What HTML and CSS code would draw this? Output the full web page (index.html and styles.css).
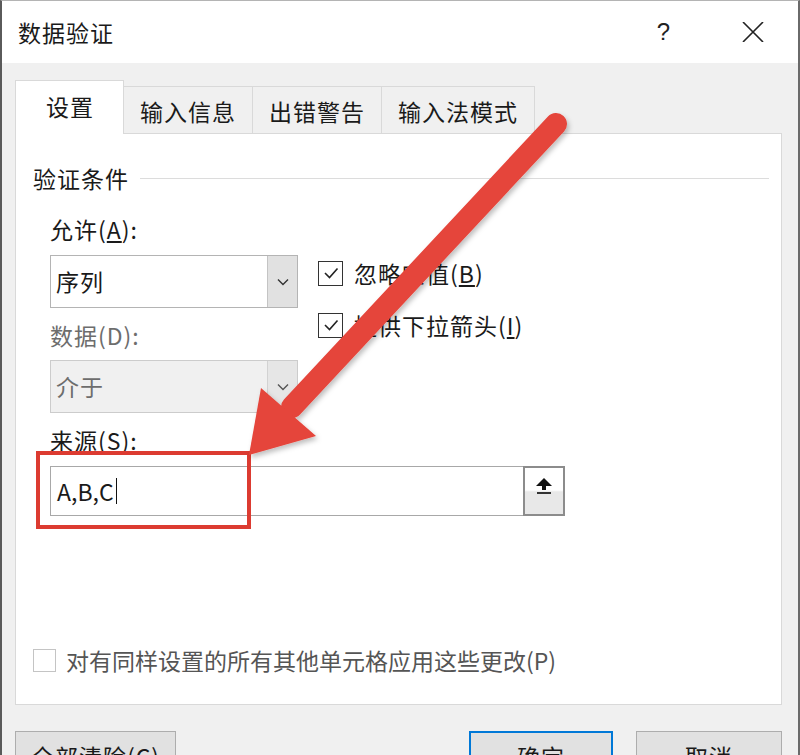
FILE: index.html
```html
<!DOCTYPE html>
<html lang="zh-CN">
<head>
    <meta charset="UTF-8">
    <meta name="viewport" content="width=device-width, initial-scale=1.0">
    <title>数据验证</title>
    <link rel="stylesheet" href="styles.css">
</head>
<body>

    <div class="dialog">

        <!-- Title bar -->
        <header class="titlebar">
            <span class="title">数据验证</span>
            <div class="title-actions">
                <span class="help">?</span>
                <svg class="close" width="22" height="20" viewBox="0 0 22 20">
                    <path d="M1 0 L21 20 M21 0 L1 20" stroke="#222" stroke-width="1.6" fill="none"/>
                </svg>
            </div>
        </header>

        <div class="dialog-body">

            <!-- Tabs -->
            <div class="tabs">
                <div class="tab active">设置</div>
                <div class="tab">输入信息</div>
                <div class="tab">出错警告</div>
                <div class="tab">输入法模式</div>
            </div>

            <!-- Settings panel -->
            <section class="panel">
                <div class="group-title"><span>验证条件</span></div>

                <div class="criteria">
                    <div class="criteria-row">
                        <div class="criteria-fields">
                            <div class="field-label">允许(<u>A</u>):</div>
                            <div class="select">
                                <span class="select-value">序列</span>
                                <span class="select-btn">
                                    <svg width="12" height="8" viewBox="0 0 12 8"><path d="M1 1.5 L6 6.5 L11 1.5" stroke="#333" stroke-width="1.4" fill="none"/></svg>
                                </span>
                            </div>

                            <div class="field-label disabled">数据(D):</div>
                            <div class="select disabled">
                                <span class="select-value">介于</span>
                                <span class="select-btn">
                                    <svg width="12" height="8" viewBox="0 0 12 8"><path d="M1 1.5 L6 6.5 L11 1.5" stroke="#555" stroke-width="1.4" fill="none"/></svg>
                                </span>
                            </div>
                        </div>

                        <div class="criteria-options">
                            <label class="option">
                                <span class="check">
                                    <svg width="20" height="20" viewBox="0 0 20 20"><path d="M4 10 L8.5 14.5 L16.5 5.5" stroke="#222" stroke-width="1.6" fill="none"/></svg>
                                </span>
                                <span>忽略空值(<u>B</u>)</span>
                            </label>
                            <label class="option">
                                <span class="check">
                                    <svg width="20" height="20" viewBox="0 0 20 20"><path d="M4 10 L8.5 14.5 L16.5 5.5" stroke="#222" stroke-width="1.6" fill="none"/></svg>
                                </span>
                                <span>提供下拉箭头(<u>I</u>)</span>
                            </label>
                        </div>
                    </div>

                    <div class="field-label">来源(S):</div>
                    <div class="source">
                        <div class="source-input">A,B,C<span class="caret"></span></div>
                        <span class="source-btn">
                            <svg width="20" height="18" viewBox="0 0 20 18">
                                <path d="M10 1 L2 9 L8 9 L8 13 L12 13 L12 9 L18 9 Z" fill="#111"/>
                                <rect x="3" y="15" width="14" height="2" fill="#333"/>
                            </svg>
                        </span>
                        <!-- annotation box -->
                        <div class="source-mark"></div>
                    </div>
                </div>

                <label class="apply">
                    <span class="check blank"></span>
                    <span>对有同样设置的所有其他单元格应用这些更改(P)</span>
                </label>
            </section>

            <!-- Dialog buttons -->
            <div class="buttons">
                <button class="btn btn-clear">全部清除(C)</button>
                <button class="btn primary">确定</button>
                <button class="btn">取消</button>
            </div>
        </div>

        <!-- Annotation arrow -->
        <svg class="arrow" width="800" height="755" viewBox="0 0 800 755">
            <defs>
                <filter id="shadow" x="-10%" y="-10%" width="120%" height="120%">
                    <feDropShadow dx="2" dy="3" stdDeviation="2.5" flood-color="#000" flood-opacity="0.25"/>
                </filter>
            </defs>
            <g filter="url(#shadow)" fill="#e5443a">
                <line x1="556" y1="124" x2="292" y2="407" stroke="#e5443a" stroke-width="22" stroke-linecap="round"/>
                <polygon points="249,455 261,388 316,436"/>
            </g>
        </svg>
    </div>

</body>
</html>
```

FILE: styles.css
```css
* {
    margin: 0;
    padding: 0;
    box-sizing: border-box;
}

body {
    font-family: "Noto Sans CJK SC", "Noto Sans", sans-serif;
    color: #1a1a1a;
    background-color: #fff;
}

/* Dialog frame */
.dialog {
    position: relative;
    width: 800px;
    height: 755px;
    overflow: hidden;
    background-color: #f0f0f0;
    border-top: 1px solid #b4b4b4;
    border-left: 2px solid #5a5a5a;
    border-right: 2px solid #6a6a6a;
}

.titlebar {
    height: 62px;
    background-color: #fff;
    display: flex;
    align-items: center;
    justify-content: space-between;
    padding: 0 34px 0 16px;
}

.title {
    font-size: 23px;
    letter-spacing: 1px;
}

.title-actions {
    display: flex;
    align-items: center;
    gap: 72px;
}

.help {
    font-family: "Liberation Sans", Arial, sans-serif;
    font-size: 24px;
    color: #222;
}

.dialog-body {
    padding: 17px 16px 0 13px;
}

/* Tabs */
.tabs {
    display: flex;
    align-items: flex-end;
    height: 54px;
    margin-bottom: -1px;
    padding-left: 1px;
}

.tab {
    height: 47px;
    margin-bottom: 1px;
    margin-left: -1px;
    padding: 2px 16px 0;
    display: flex;
    align-items: center;
    font-size: 23px;
    letter-spacing: 1px;
    background-color: #f0f0f0;
    border: 1px solid #d9d9d9;
    border-bottom: none;
}

.tab.active {
    position: relative;
    z-index: 1;
    height: 54px;
    margin-bottom: 0;
    padding: 0 29px 4px 30px;
    background-color: #fff;
}

/* Panel */
.panel {
    height: 572px;
    background-color: #fff;
    border: 1px solid #d9d9d9;
    padding: 29px 12px 0 17px;
}

.group-title {
    display: flex;
    align-items: center;
    font-size: 23px;
    letter-spacing: 1px;
    line-height: 30px;
}

.group-title::after {
    content: "";
    flex: 1;
    height: 1px;
    margin-left: 11px;
    background-color: #dcdcdc;
}

.criteria {
    padding-left: 17px;
    margin-top: 21px;
}

.criteria-row {
    display: flex;
    gap: 20px;
}

.criteria-fields {
    width: 248px;
}

.field-label {
    font-size: 23px;
    letter-spacing: 1px;
    line-height: 30px;
    margin-top: 12px;
}

.criteria-fields .field-label:first-child {
    margin-top: 0;
}

.field-label.disabled {
    color: #6d6d6d;
}

.select {
    display: flex;
    height: 53px;
    margin-top: 11px;
    background-color: #fff;
    border: 1px solid #b4b4b4;
}

.select-value {
    flex: 1;
    padding-left: 5px;
    font-size: 23px;
    letter-spacing: 1px;
    line-height: 51px;
}

.select-btn {
    width: 30px;
    display: flex;
    align-items: center;
    justify-content: center;
    background-color: #e1e1e1;
    border-left: 1px solid #c4c4c4;
}

.select.disabled {
    margin-top: 10px;
    background-color: #f0f0f0;
    border-color: #cccccc;
    color: #6d6d6d;
}

.select.disabled .select-btn {
    background-color: #e6e6e6;
    border-left-color: #d2d2d2;
}

/* Checkboxes */
.criteria-options {
    display: flex;
    flex-direction: column;
    gap: 26px;
    padding-top: 46px;
}

.option {
    display: flex;
    align-items: center;
    gap: 11px;
    height: 26px;
    font-size: 23px;
    letter-spacing: 1px;
}

.check {
    width: 25px;
    height: 25px;
    display: flex;
    align-items: center;
    justify-content: center;
    background-color: #fff;
    border: 1.5px solid #333;
}

.check.blank {
    width: 23px;
    height: 23px;
    border: 1px solid #c4c4c4;
}

/* Source field */
.source {
    position: relative;
    display: flex;
    width: 515px;
    height: 50px;
    margin-top: 11px;
    border: 1px solid #a8a8a8;
    background-color: #fff;
}

.source-input {
    flex: 1;
    display: flex;
    align-items: center;
    padding-left: 6px;
    font-size: 23px;
    line-height: 48px;
}

.caret {
    width: 0;
    height: 26px;
    margin-left: 2px;
    border-left: 1.5px solid #111;
}

.source-btn {
    width: 42px;
    margin: -1px -1px -1px 0;
    display: flex;
    justify-content: center;
    padding-top: 9px;
    border: 2px solid #8c8c8c;
    background: linear-gradient(#fff 0%, #fff 48%, #e8e8e8 52%, #e8e8e8 100%);
}

.source-mark {
    position: absolute;
    left: -15px;
    top: -16px;
    width: 215px;
    height: 78px;
    border: 4px solid #dc3b31;
}

/* Apply to all */
.apply {
    display: flex;
    align-items: center;
    gap: 10px;
    margin-top: 129px;
    line-height: 30px;
    font-size: 23px;
    color: #555;
}

/* Buttons */
.buttons {
    display: flex;
    gap: 23px;
    margin-top: 26px;
}

.btn {
    height: 50px;
    font-family: inherit;
    font-size: 23px;
    letter-spacing: 1px;
    color: #1a1a1a;
    background-color: #e1e1e1;
    border: 1px solid #adadad;
    width: 146px;
}

.btn-clear {
    width: 161px;
    margin-right: auto;
}

.btn.primary {
    width: 144px;
    border: 2px solid #0078d7;
}

/* Annotation arrow */
.arrow {
    position: absolute;
    top: -1px;
    left: -2px;
    pointer-events: none;
}
```
